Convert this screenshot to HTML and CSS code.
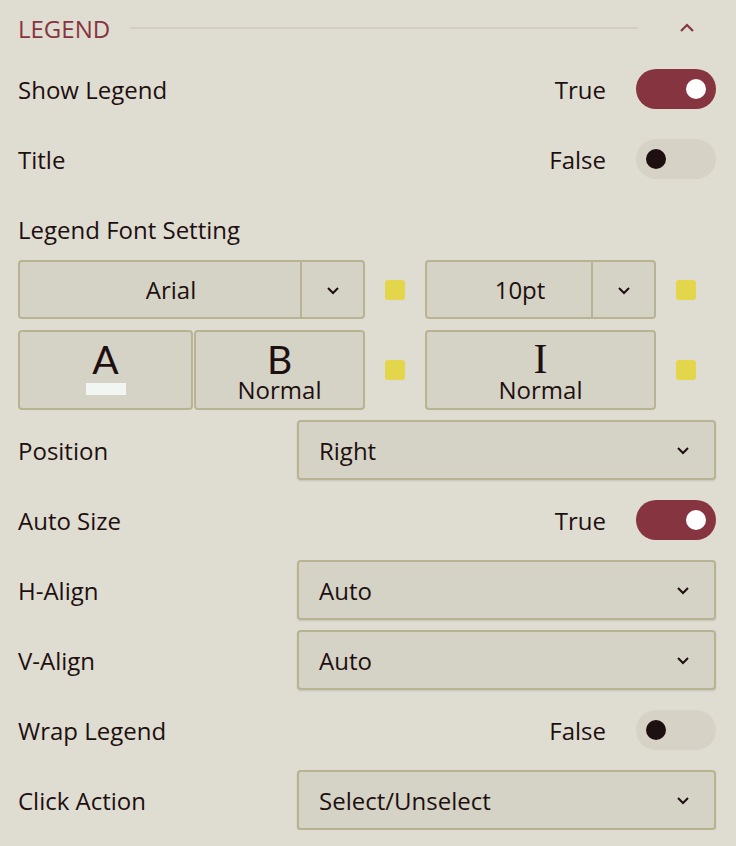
FILE: index.html
```html
<!DOCTYPE html>
<html lang="en">
    <head>
        <meta charset="utf-8" />
        <title>Legend settings</title>
        <link rel="stylesheet" href="styles.css">
    </head>
    <body>
        <div class="panel">
            <div class="section-head">
                <span class="section-title">LEGEND</span>
                <span class="section-line"></span>
                <svg class="collapse" width="18" height="12" viewBox="0 0 18 12">
                    <path d="M3 9 L9 3 L15 9" fill="none" stroke="#87343f" stroke-width="2.2" />
                </svg>
            </div>

            <div class="row">
                <span class="label">Show Legend</span>
                <div class="switch-wrap">
                    <span class="switch-text">True</span>
                    <span class="switch on"><span class="knob"></span></span>
                </div>
            </div>

            <div class="row">
                <span class="label">Title</span>
                <div class="switch-wrap">
                    <span class="switch-text">False</span>
                    <span class="switch"><span class="knob"></span></span>
                </div>
            </div>

            <div class="row sub-head">
                <span class="label">Legend Font Setting</span>
            </div>

            <div class="font-grid">
                <div class="combo family">
                    <span class="combo-value">Arial</span>
                    <span class="combo-arrow">
                        <svg width="14" height="10" viewBox="0 0 14 10"><path d="M2 3 L7 8 L12 3" fill="none" stroke="#1e0f10" stroke-width="2" /></svg>
                    </span>
                </div>
                <span class="marker"></span>
                <div class="combo size">
                    <span class="combo-value">10pt</span>
                    <span class="combo-arrow">
                        <svg width="14" height="10" viewBox="0 0 14 10"><path d="M2 3 L7 8 L12 3" fill="none" stroke="#1e0f10" stroke-width="2" /></svg>
                    </span>
                </div>
                <span class="marker"></span>

                <div class="style-pair">
                    <div class="style-btn">
                        <span class="glyph">A</span>
                        <span class="swatch"></span>
                    </div>
                    <div class="style-btn">
                        <span class="glyph">B</span>
                        <span class="style-name">Normal</span>
                    </div>
                </div>
                <span class="marker"></span>
                <div class="style-btn">
                    <span class="glyph italic-glyph">I</span>
                    <span class="style-name">Normal</span>
                </div>
                <span class="marker"></span>
            </div>

            <div class="row">
                <span class="label">Position</span>
                <div class="select">
                    <span>Right</span>
                    <svg width="14" height="10" viewBox="0 0 14 10"><path d="M2 3 L7 8 L12 3" fill="none" stroke="#1e0f10" stroke-width="2" /></svg>
                </div>
            </div>

            <div class="row">
                <span class="label">Auto Size</span>
                <div class="switch-wrap">
                    <span class="switch-text">True</span>
                    <span class="switch on"><span class="knob"></span></span>
                </div>
            </div>

            <div class="row">
                <span class="label">H-Align</span>
                <div class="select">
                    <span>Auto</span>
                    <svg width="14" height="10" viewBox="0 0 14 10"><path d="M2 3 L7 8 L12 3" fill="none" stroke="#1e0f10" stroke-width="2" /></svg>
                </div>
            </div>

            <div class="row">
                <span class="label">V-Align</span>
                <div class="select">
                    <span>Auto</span>
                    <svg width="14" height="10" viewBox="0 0 14 10"><path d="M2 3 L7 8 L12 3" fill="none" stroke="#1e0f10" stroke-width="2" /></svg>
                </div>
            </div>

            <div class="row">
                <span class="label">Wrap Legend</span>
                <div class="switch-wrap">
                    <span class="switch-text">False</span>
                    <span class="switch"><span class="knob"></span></span>
                </div>
            </div>

            <div class="row">
                <span class="label">Click Action</span>
                <div class="select">
                    <span>Select/Unselect</span>
                    <svg width="14" height="10" viewBox="0 0 14 10"><path d="M2 3 L7 8 L12 3" fill="none" stroke="#1e0f10" stroke-width="2" /></svg>
                </div>
            </div>
        </div>
    </body>
</html>
```

FILE: styles.css
```css
html,
body {
    margin: 0;
    padding: 0;
    background: #dfddd1;
}

body {
    font-family: "Open Sans", "Noto Sans", sans-serif;
    font-size: 24px;
    color: #1e0f10;
}

.panel {
    width: 736px;
    padding: 0 20px 0 18px;
    box-sizing: border-box;
    display: flex;
    flex-direction: column;
    gap: 10px;
}

.section-head {
    height: 49px;
    padding-top: 7px;
    display: flex;
    align-items: center;
    box-sizing: border-box;
}

.section-title {
    color: #87343f;
    font-size: 24px;
}

.section-line {
    flex: 1;
    height: 2px;
    background: #d6cdc2;
    margin: 0 40px 0 20px;
}

.collapse {
    margin-right: 20px;
}

.row {
    height: 60px;
    display: flex;
    align-items: center;
    justify-content: space-between;
}

.row.sub-head {
    margin-bottom: -9px;
}

.switch-wrap {
    display: flex;
    align-items: center;
    gap: 30px;
}

.switch {
    width: 80px;
    height: 40px;
    border-radius: 20px;
    background: #d6d3c6;
    display: flex;
    align-items: center;
    padding: 0 10px;
    box-sizing: border-box;
}

.switch .knob {
    width: 20px;
    height: 20px;
    border-radius: 50%;
    background: #1e0f10;
}

.switch.on {
    background: #873441;
    justify-content: flex-end;
}

.switch.on .knob {
    background: #fff;
}

.font-grid {
    display: grid;
    grid-template-columns: 347px 60px 231px 60px;
    grid-template-rows: 59px 80px;
    row-gap: 11px;
    align-items: center;
    justify-items: start;
}

.marker {
    width: 20px;
    height: 20px;
    border-radius: 3px;
    background: #e3d64a;
    justify-self: center;
}

.combo,
.style-btn,
.select {
    background: #d5d3c6;
    border: 2px solid #b8b393;
    border-radius: 4px;
    box-sizing: border-box;
}

.combo {
    width: 100%;
    height: 59px;
    display: flex;
}

.combo-value {
    flex: 1;
    padding-left: 22px;
    display: flex;
    align-items: center;
    justify-content: center;
}

.combo-arrow {
    width: 61px;
    border-left: 2px solid #b8b393;
    display: flex;
    align-items: center;
    justify-content: center;
}

.style-pair {
    width: 100%;
    display: grid;
    grid-template-columns: 175px 171px;
    gap: 1px;
}

.style-btn {
    width: 100%;
    height: 80px;
    display: flex;
    flex-direction: column;
    align-items: center;
    justify-content: flex-start;
    padding-top: 10px;
}

.glyph {
    font-family: Lato, "Open Sans", sans-serif;
    font-weight: 400;
    font-size: 39px;
    line-height: 34px;
    height: 34px;
}

.italic-glyph {
    font-family: "Liberation Serif", serif;
    font-size: 42px;
}

.swatch {
    width: 40px;
    height: 12px;
    background: #f2f6f2;
    margin-top: 7px;
}

.style-name {
    line-height: 24px;
    margin-top: 2px;
}

.select {
    width: 419px;
    height: 60px;
    display: flex;
    align-items: center;
    justify-content: space-between;
    padding: 0 24px 0 20px;
    box-shadow: 0 1px 2px rgba(0, 0, 0, 0.12);
}
```
